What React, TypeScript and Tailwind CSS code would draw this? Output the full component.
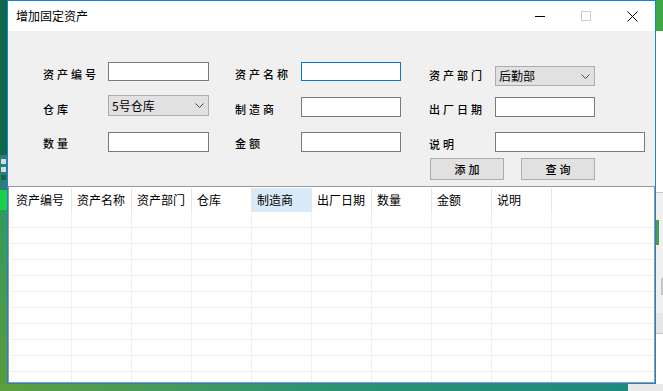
import React from "react";

const labelCls =
  "text-[11px] leading-[13px] tracking-[3px] font-medium text-black whitespace-nowrap";
const cjk = { fontFamily: '"Noto Sans CJK SC", "Noto Sans", sans-serif' };

function Chevron() {
  return (
    <svg width="9" height="5" viewBox="0 0 9 5" className="shrink-0">
      <path d="M0.5 0.5 L4.5 4.5 L8.5 0.5" fill="none" stroke="#444" strokeWidth="1" />
    </svg>
  );
}

function Combo({ text, w, h, mt }: { text: string; w: string; h: string; mt?: string }) {
  return (
    <div
      className={`${w} ${h} ${mt ?? ""} shrink-0 border border-[#adadad] bg-[#e1e1e1] flex items-center justify-between pl-[3px] pr-[4px]`}
    >
      <span className="text-[12px] leading-[14px] text-black">{text}</span>
      <Chevron />
    </div>
  );
}

export default function App() {
  const cols = ["资产编号", "资产名称", "资产部门", "仓库", "制造商", "出厂日期", "数量", "金额", "说明"];
  const rows = Array.from({ length: 11 });
  return (
    <div className="w-[663px] h-[391px] overflow-hidden flex flex-col" style={cjk}>
      <div className="flex h-[384px]">
        {/* left desktop strip */}
        <div className="w-[7px] h-full flex flex-col">
          <div className="h-[155px] bg-[#0f684c]" />
          <div className="h-[35px] bg-[#2f7d78] flex flex-col gap-[3px] pt-[4px] pl-[1px]">
            <div className="h-[5px] w-[5px] bg-[#cfe0e0]" />
            <div className="h-[5px] w-[5px] bg-[#cfe0e0]" />
            <div className="h-[5px] w-[5px] bg-[#0f684c]" />
          </div>
          <div className="h-[20px] bg-[#19d04a]" />
          <div className="flex-1 bg-gradient-to-b from-[#2f9a5a] to-[#5a9a3c]" />
        </div>

        {/* window */}
        <div className="w-[649px] h-full border border-[#1883d7] flex flex-col bg-[#f0f0f0]">
          {/* title bar */}
          <div className="h-[30px] bg-white flex items-center shrink-0">
            <div className="pl-[8px] text-[12px] text-black flex-1">增加固定资产</div>
            <div className="w-[46px] h-full flex items-center justify-center">
              <div className="w-[10px] h-[1px] bg-black" />
            </div>
            <div className="w-[46px] h-full flex items-center justify-center">
              <div className="w-[10px] h-[10px] border border-[#cccccc]" />
            </div>
            <div className="w-[46px] h-full flex items-center justify-center">
              <svg width="11" height="11" viewBox="0 0 11 11">
                <path d="M0.5 0.5 L10.5 10.5 M10.5 0.5 L0.5 10.5" stroke="#000" strokeWidth="1" />
              </svg>
            </div>
          </div>

          {/* form area */}
          <div className="h-[155px] shrink-0 pt-[31px] flex flex-col">
            {/* row 1 */}
            <div className="h-[33px] flex items-start pl-[35px]">
              <div className={`${labelCls} w-[65px] mt-[6px]`}>资产编号</div>
              <div className="w-[101px] h-[19px] shrink-0 bg-white border border-[#7a7a7a]" />
              <div className="w-[26px]" />
              <div className={`${labelCls} w-[66px] mt-[6px]`}>资产名称</div>
              <div className="w-[100px] h-[19px] shrink-0 bg-white border border-[#0078d7]" />
              <div className="w-[28px]" />
              <div className={`${labelCls} w-[66px] mt-[7px]`}>资产部门</div>
              <Combo text="后勤部" w="w-[100px]" h="h-[20px]" mt="mt-[4px]" />
            </div>
            {/* row 2 */}
            <div className="h-[37px] flex items-start pl-[35px]">
              <div className={`${labelCls} w-[65px] mt-[8px]`}>仓库</div>
              <Combo text="5号仓库" w="w-[101px]" h="h-[21px]" />
              <div className="w-[26px]" />
              <div className={`${labelCls} w-[66px] mt-[8px]`}>制造商</div>
              <div className="w-[100px] h-[20px] mt-[2px] shrink-0 bg-white border border-[#7a7a7a]" />
              <div className="w-[28px]" />
              <div className={`${labelCls} w-[66px] mt-[8px]`}>出厂日期</div>
              <div className="w-[100px] h-[20px] mt-[2px] shrink-0 bg-white border border-[#7a7a7a]" />
            </div>
            {/* row 3 */}
            <div className="h-[26px] flex items-start pl-[35px]">
              <div className={`${labelCls} w-[65px] mt-[5px]`}>数量</div>
              <div className="w-[101px] h-[20px] shrink-0 bg-white border border-[#7a7a7a]" />
              <div className="w-[26px]" />
              <div className={`${labelCls} w-[66px] mt-[5px]`}>金额</div>
              <div className="w-[100px] h-[20px] shrink-0 bg-white border border-[#7a7a7a]" />
              <div className="w-[28px]" />
              <div className={`${labelCls} w-[66px] mt-[6px]`}>说明</div>
              <div className="w-[150px] h-[20px] shrink-0 bg-white border border-[#7a7a7a]" />
            </div>
            {/* buttons */}
            <div className="h-[22px] flex items-start pl-[422px] gap-[17px]">
              <div className="w-[74px] h-[22px] border border-[#adadad] bg-[#e1e1e1] flex items-center justify-center">
                <span className={`${labelCls} -mr-[3px]`}>添加</span>
              </div>
              <div className="w-[74px] h-[22px] border border-[#adadad] bg-[#e1e1e1] flex items-center justify-center">
                <span className={`${labelCls} -mr-[3px]`}>查询</span>
              </div>
            </div>
          </div>

          {/* data grid */}
          <div className="flex-1 border border-[#9a9a9a] bg-white overflow-hidden flex flex-col pt-[1px] pl-[1px]">
            <div className="h-[24px] flex shrink-0">
              {cols.map((c, i) => (
                <div
                  key={c}
                  className={`${i === 0 ? "w-[62px] pl-[6px]" : "w-[60px] pl-[5px]"} h-full shrink-0 border-r border-[#e5e5e5] flex items-center text-[12px] text-black ${
                    i === 4 ? "bg-[#d9ebf9]" : "bg-white"
                  }`}
                >
                  {c}
                </div>
              ))}
            </div>
            {rows.map((_, r) => (
              <div key={r} className="h-[16px] shrink-0 flex border-b border-[#efefef]">
                {cols.map((c, i) => (
                  <div
                    key={c}
                    className={`${i === 0 ? "w-[62px]" : "w-[60px]"} h-full shrink-0 border-r border-[#efefef]`}
                  />
                ))}
              </div>
            ))}
          </div>
        </div>

        {/* right desktop strip */}
        <div className="w-[7px] h-full flex flex-col bg-white">
          <div className="h-[31px] bg-[#3ea845]" />
          <div className="h-[161px] bg-white" />
          <div className="h-[1px] bg-[#c8c8c8]" />
          <div className="h-[27px] bg-[#f0f0f0]" />
          <div className="h-[25px] flex bg-[#f0f0f0]">
            <div className="w-[3px] bg-[#4a9a5a]" />
          </div>
          <div className="h-[33px] bg-[#f0f0f0]" />
          <div className="h-[17px] flex justify-end bg-[#f0f0f0]">
            <div className="w-[2px] bg-[#c4c4c4]" />
          </div>
          <div className="h-[18px] bg-[#f0f0f0]" />
          <div className="h-[20px] bg-[#e6e6e6]" />
          <div className="h-[1px] bg-[#c8c8c8]" />
          <div className="flex-1 bg-white" />
        </div>
      </div>

      {/* bottom desktop strip */}
      <div className="h-[7px] flex">
        <div className="w-[628px] bg-gradient-to-r from-[#5c9f3d] via-[#2c9470] to-[#1c8a7e]" />
        <div className="flex-1 bg-[#e8e8e8]" />
      </div>
    </div>
  );
}
